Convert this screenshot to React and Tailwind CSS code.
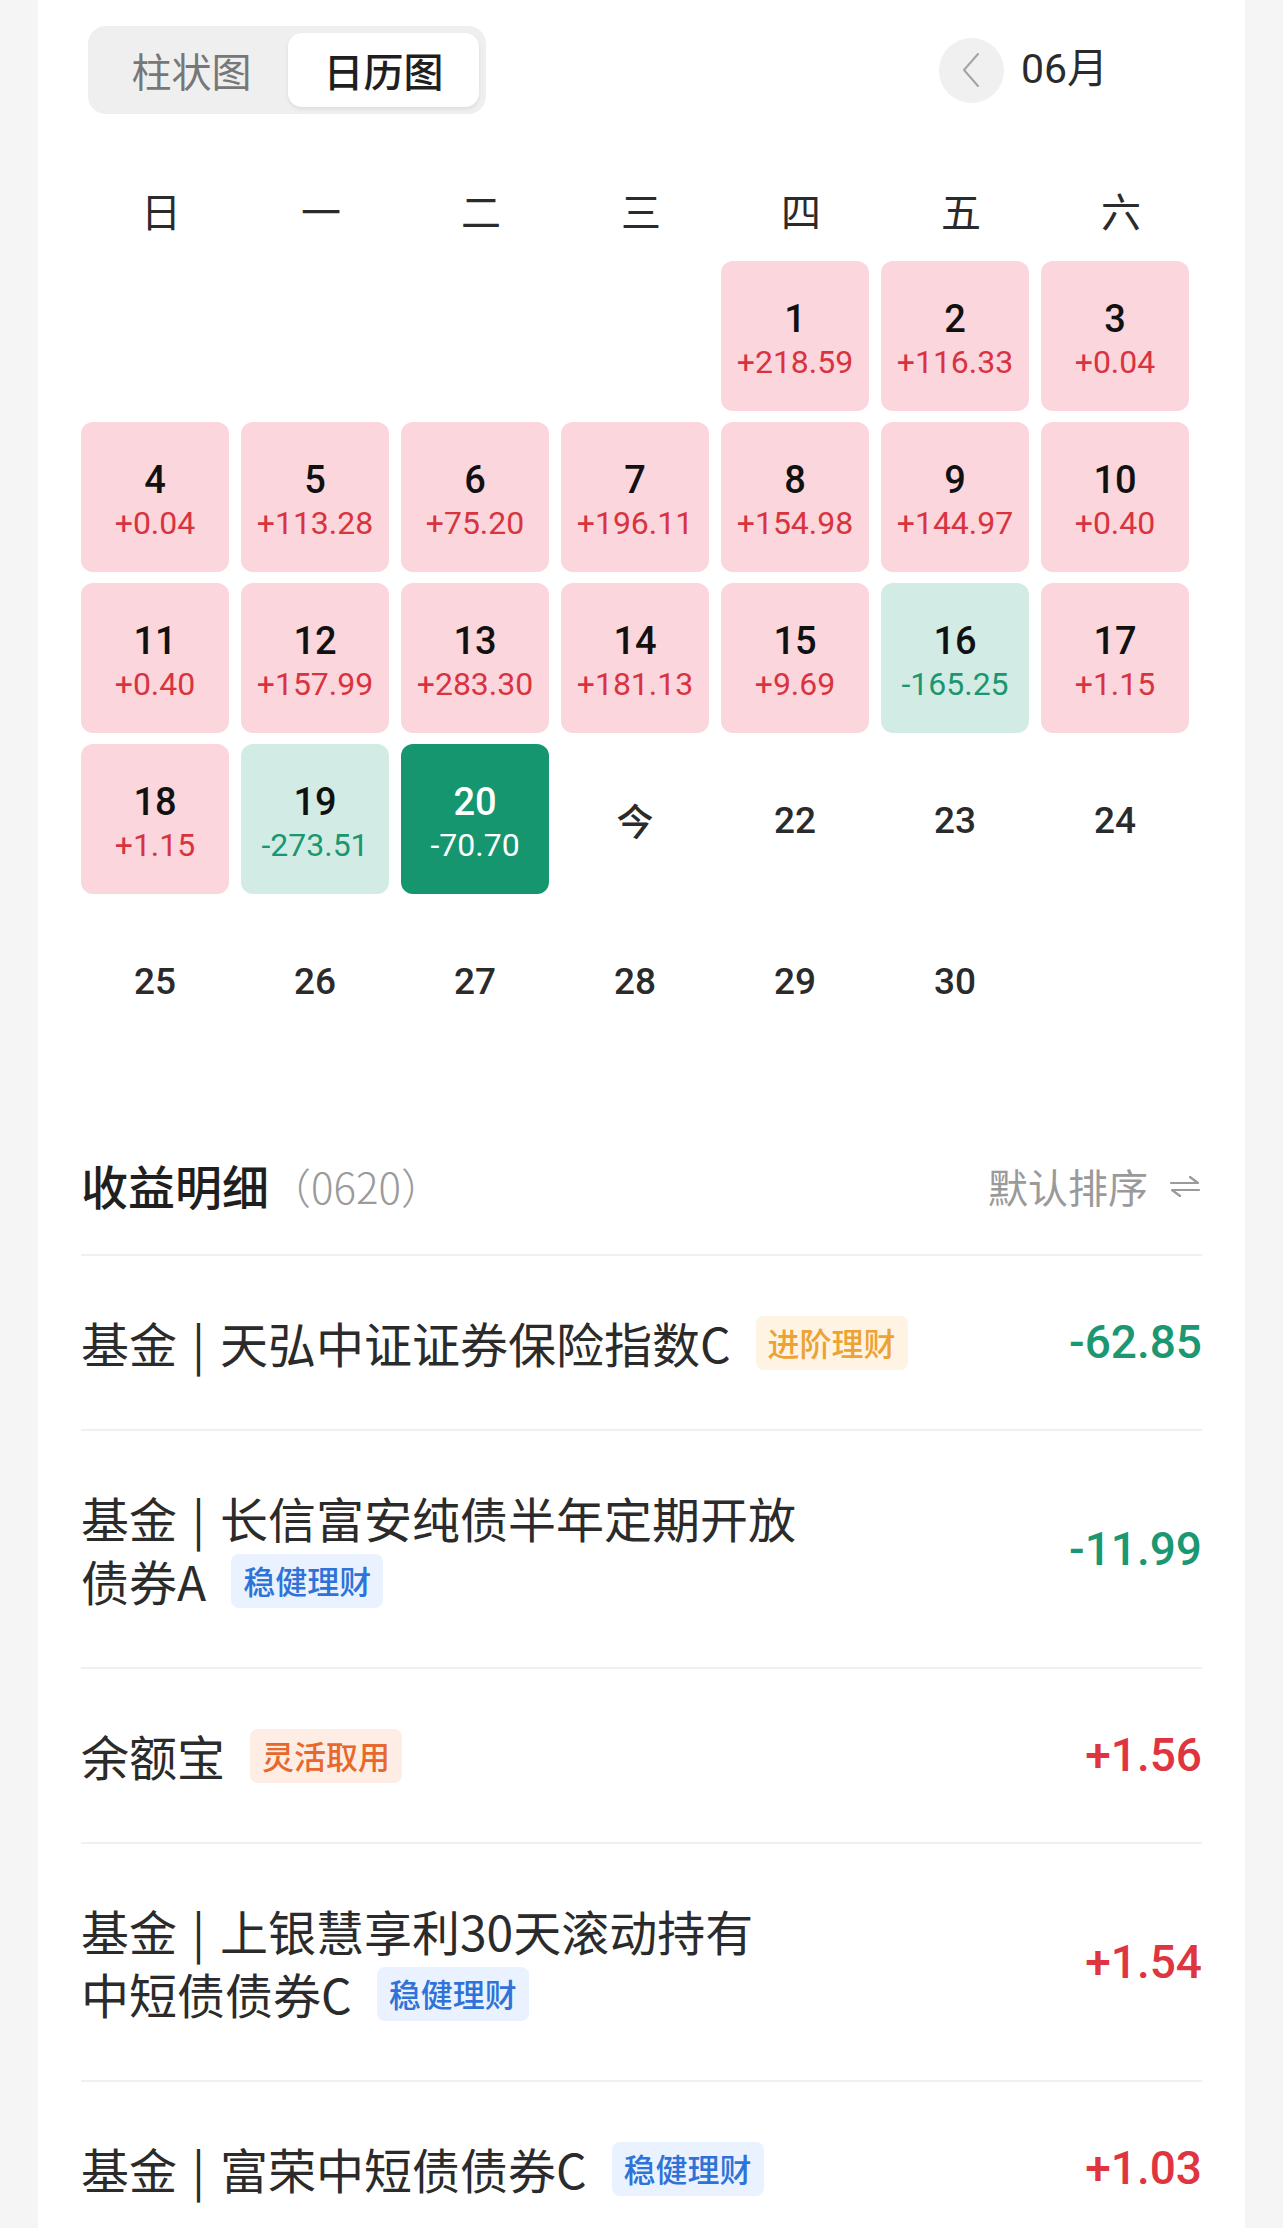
import React from 'react';

const NUM = { fontFamily: 'Roboto, "Noto Sans CJK SC", sans-serif' };
const CJK = { fontFamily: '"Noto Sans CJK SC", "Noto Sans", sans-serif' };

const WEEK = ['日', '一', '二', '三', '四', '五', '六'];

// type: up / down / sel / today / plain / empty
const DAYS = [
  { t: 'empty' }, { t: 'empty' }, { t: 'empty' }, { t: 'empty' },
  { d: 1, v: '+218.59', t: 'up' }, { d: 2, v: '+116.33', t: 'up' }, { d: 3, v: '+0.04', t: 'up' },
  { d: 4, v: '+0.04', t: 'up' }, { d: 5, v: '+113.28', t: 'up' }, { d: 6, v: '+75.20', t: 'up' },
  { d: 7, v: '+196.11', t: 'up' }, { d: 8, v: '+154.98', t: 'up' }, { d: 9, v: '+144.97', t: 'up' },
  { d: 10, v: '+0.40', t: 'up' },
  { d: 11, v: '+0.40', t: 'up' }, { d: 12, v: '+157.99', t: 'up' }, { d: 13, v: '+283.30', t: 'up' },
  { d: 14, v: '+181.13', t: 'up' }, { d: 15, v: '+9.69', t: 'up' }, { d: 16, v: '-165.25', t: 'down' },
  { d: 17, v: '+1.15', t: 'up' },
  { d: 18, v: '+1.15', t: 'up' }, { d: 19, v: '-273.51', t: 'down' }, { d: 20, v: '-70.70', t: 'sel' },
  { d: '今', t: 'today' }, { d: 22, t: 'plain' }, { d: 23, t: 'plain' }, { d: 24, t: 'plain' },
  { d: 25, t: 'plain' }, { d: 26, t: 'plain' }, { d: 27, t: 'plain' }, { d: 28, t: 'plain' },
  { d: 29, t: 'plain' }, { d: 30, t: 'plain' }, { t: 'empty' },
];

const TAGS = {
  adv: { text: '进阶理财', cls: 'bg-[#fff4e3] text-[#eda234]' },
  safe: { text: '稳健理财', cls: 'bg-[#e9f2fe] text-[#2f72d8]' },
  flex: { text: '灵活取用', cls: 'bg-[#fdede4] text-[#e8682c]' },
};

const ROWS = [
  { lines: [['基金', '天弘中证证券保险指数C']], tag: 'adv', v: '-62.85' },
  { lines: [['基金', '长信富安纯债半年定期开放'], [null, '债券A']], tag: 'safe', v: '-11.99' },
  { lines: [[null, '余额宝']], tag: 'flex', v: '+1.56' },
  { lines: [['基金', '上银慧享利30天滚动持有'], [null, '中短债债券C']], tag: 'safe', v: '+1.54' },
  { lines: [['基金', '富荣中短债债券C']], tag: 'safe', v: '+1.03' },
];

function DayCell({ day }) {
  if (day.t === 'empty') return <div />;
  if (day.t === 'plain' || day.t === 'today') {
    return (
      <div
        className="flex items-center justify-center pt-[3px] text-[37px] font-medium text-[#2b2b2b]"
        style={day.t === 'today' ? CJK : NUM}
      >
        {day.d}
      </div>
    );
  }
  const bg = day.t === 'up' ? 'bg-[#fbd6dc]' : day.t === 'down' ? 'bg-[#d2ece5]' : 'bg-[#15966f]';
  const numColor = day.t === 'sel' ? 'text-white' : 'text-[#111]';
  const valColor = day.t === 'up' ? 'text-[#d8343f]' : day.t === 'down' ? 'text-[#1a9670]' : 'text-white';
  return (
    <div className={`flex flex-col items-center justify-center rounded-[12px] pt-[9px] ${bg}`} style={NUM}>
      <div className={`text-[38px] leading-[40px] font-medium ${numColor}`}>{day.d}</div>
      <div className={`mt-[3px] text-[32px] leading-[40px] ${valColor}`}>{day.v}</div>
    </div>
  );
}

function Tag({ kind }) {
  const t = TAGS[kind];
  return (
    <span className={`ml-[25px] inline-flex h-[54px] items-center rounded-[8px] px-[12px] text-[32px] font-medium ${t.cls}`} style={CJK}>
      {t.text}
    </span>
  );
}

function SortIcon() {
  return (
    <svg width="34" height="22" viewBox="0 0 34 22" fill="none" stroke="#9a9a9a" strokeWidth="2.2" strokeLinecap="round" strokeLinejoin="round">
      <path d="M3 8h27l-8-6" />
      <path d="M31 15H4l8 6" />
    </svg>
  );
}

export default function App() {
  return (
    <div className="min-h-[2228px] w-full bg-[#f5f5f5] px-[38px]" style={CJK}>
      <div className="min-h-[2228px] bg-white px-[43px] pt-[26px] pb-[60px]">
        {/* top bar */}
        <div className="flex h-[88px] items-center justify-between">
          <div className="ml-[7px] flex h-[88px] w-[398px] items-center rounded-[18px] bg-[#efefef] p-[7px]">
            <div className="w-[193px] text-center text-[40px] text-[#777]">柱状图</div>
            <div className="flex h-[74px] w-[191px] items-center justify-center rounded-[14px] bg-white text-[40px] font-medium text-[#1f1f1f] shadow-[0_2px_4px_rgba(0,0,0,0.08)]">
              日历图
            </div>
          </div>
          <div className="mr-[94px] flex items-center">
            <div className="flex h-[65px] w-[65px] items-center justify-center rounded-full bg-[#f0f0f0]">
              <svg width="20" height="36" viewBox="0 0 20 36" fill="none" stroke="#a3a3a3" strokeWidth="2" strokeLinecap="round" strokeLinejoin="round">
                <path d="M17 2L3 18l14 16" />
              </svg>
            </div>
            <div className="ml-[17px] text-[41px] text-[#2b2b2b]" style={NUM}>06月</div>
          </div>
        </div>

        {/* weekdays */}
        <div className="mt-[66px] grid h-[60px] w-[1108px] grid-cols-[repeat(7,148px)] items-center gap-x-[12px] pl-[6px]">
          {WEEK.map((w) => (
            <div key={w} className="text-center text-[40px] text-[#2b2b2b]">{w}</div>
          ))}
        </div>

        {/* calendar */}
        <div className="mt-[21px] grid w-[1108px] grid-cols-[repeat(7,148px)] auto-rows-[150px] gap-x-[12px] gap-y-[11px]">
          {DAYS.map((day, i) => (
            <DayCell key={i} day={day} />
          ))}
        </div>

        {/* detail header */}
        <div className="mt-[99px] flex h-[63px] items-center justify-between">
          <div className="flex items-center">
            <span className="text-[47px] font-medium text-[#1f1f1f]">收益明细</span>
            <span className="text-[42px] font-light text-[#9a9a9a]">（0620）</span>
          </div>
          <div className="flex items-center">
            <span className="text-[40px] text-[#9a9a9a]">默认排序</span>
            <span className="ml-[20px] flex items-center"><SortIcon /></span>
          </div>
        </div>
        <div className="mt-[37px] h-[2px] bg-[#f0f0f0]" />

        {/* rows */}
        {ROWS.map((row, i) => (
          <div key={i}>
            <div className="flex items-center justify-between py-[55px]">
              <div className="flex flex-col">
                {row.lines.map(([pre, text], j) => (
                  <div key={j} className="flex h-[63px] items-center text-[48px] leading-[63px] text-[#2b2b2b]">
                    {pre && (
                      <>
                        <span>{pre}</span>
                        <span className="mx-[15px] text-[#2b2b2b]">|</span>
                      </>
                    )}
                    <span>{text}</span>
                    {j === row.lines.length - 1 && <Tag kind={row.tag} />}
                  </div>
                ))}
              </div>
              <div
                className={`text-[46px] leading-[63px] font-medium ${row.v.startsWith('-') ? 'text-[#1b9772]' : 'text-[#df3541]'}`}
                style={NUM}
              >
                {row.v}
              </div>
            </div>
            {i < ROWS.length - 1 && <div className="h-[2px] bg-[#f0f0f0]" />}
          </div>
        ))}
      </div>
    </div>
  );
}
